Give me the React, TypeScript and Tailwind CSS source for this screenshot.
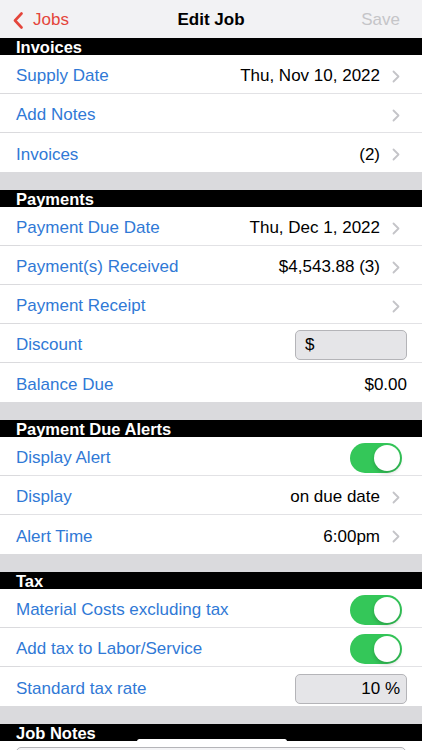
import React from 'react';

const font = { fontFamily: '"Liberation Sans", Arial, sans-serif' };

type Row =
  | { label: string; value?: string; chevron?: boolean }
  | { label: string; toggle: true }
  | { label: string; input: string; align: 'left' | 'right' };

const sections: { title: string; rows: Row[] }[] = [
  {
    title: 'Invoices',
    rows: [
      { label: 'Supply Date', value: 'Thu, Nov 10, 2022', chevron: true },
      { label: 'Add Notes', chevron: true },
      { label: 'Invoices', value: '(2)', chevron: true },
    ],
  },
  {
    title: 'Payments',
    rows: [
      { label: 'Payment Due Date', value: 'Thu, Dec 1, 2022', chevron: true },
      { label: 'Payment(s) Received', value: '$4,543.88 (3)', chevron: true },
      { label: 'Payment Receipt', chevron: true },
      { label: 'Discount', input: '$', align: 'left' },
      { label: 'Balance Due', value: '$0.00' },
    ],
  },
  {
    title: 'Payment Due Alerts',
    rows: [
      { label: 'Display Alert', toggle: true },
      { label: 'Display', value: 'on due date', chevron: true },
      { label: 'Alert Time', value: '6:00pm', chevron: true },
    ],
  },
  {
    title: 'Tax',
    rows: [
      { label: 'Material Costs excluding tax', toggle: true },
      { label: 'Add tax to Labor/Service', toggle: true },
      { label: 'Standard tax rate', input: '10 %', align: 'right' },
    ],
  },
];

function Chevron() {
  return (
    <svg width="8" height="13" viewBox="0 0 8 13" className="ml-[12px] mr-[7px] shrink-0">
      <path d="M1.5 1.5 L6.5 6.5 L1.5 11.5" fill="none" stroke="#c4c4c8" strokeWidth="1.8" strokeLinecap="round" strokeLinejoin="round" />
    </svg>
  );
}

function Toggle() {
  return (
    <div className="mr-[5px] flex h-[30px] w-[52px] items-center justify-end rounded-full bg-[#34c759] p-[2px]">
      <div className="h-[26px] w-[26px] rounded-full bg-white shadow-[0_2px_4px_rgba(0,0,0,0.2)]" />
    </div>
  );
}

function RowView({ row, last }: { row: Row; last: boolean }) {
  return (
    <>
      <div className={`flex items-center bg-white pl-4 pr-[15px] pt-[4px] ${last ? 'h-[39px]' : 'h-[38px]'}`}>
        <span className="flex-1 text-[17px] text-[#3079d6]">{row.label}</span>
        {'toggle' in row && <Toggle />}
        {'input' in row && (
          <div
            className={`flex h-[30px] w-[112px] items-center rounded-[5px] border border-[#b4b4b8] bg-[#e5e5e8] text-[17px] text-black ${
              row.align === 'right' ? 'justify-end pr-[6px]' : 'pl-[9px]'
            }`}
          >
            {row.input}
          </div>
        )}
        {!('toggle' in row) && !('input' in row) && (
          <>
            {row.value && <span className="text-[17px] text-black">{row.value}</span>}
            {row.chevron && <Chevron />}
          </>
        )}
      </div>
      {!last && <div className="ml-5 h-px bg-[#e2e2e5]" />}
    </>
  );
}

function Header({ title }: { title: string }) {
  return (
    <div className="h-[17px] bg-black pl-4 text-[16.5px] font-bold leading-[18px] text-white">{title}</div>
  );
}

export default function App() {
  return (
    <div className="relative h-[750px] w-[422px] overflow-hidden bg-[#dadadd]" style={font}>
      <div className="flex h-[38px] items-center bg-[#f2f2f4] px-[13px] pt-[2px]">
        <div className="flex w-[100px] items-center">
          <svg width="10" height="17" viewBox="0 0 10 17">
            <path d="M8.5 1.5 L2 8.5 L8.5 15.5" fill="none" stroke="#e4453b" strokeWidth="2.6" strokeLinecap="round" strokeLinejoin="round" />
          </svg>
          <span className="ml-[10px] text-[17px] text-[#e4453b]">Jobs</span>
        </div>
        <div className="flex-1 text-center text-[17px] font-bold text-black">Edit Job</div>
        <div className="w-[100px] pr-[9px] text-right text-[17px] text-[#c5c5c8]">Save</div>
      </div>

      {sections.map((s, i) => (
        <div key={s.title}>
          {i > 0 && <div className="h-[18px]" />}
          <Header title={s.title} />
          {s.rows.map((r, j) => (
            <RowView key={r.label} row={r} last={j === s.rows.length - 1} />
          ))}
        </div>
      ))}

      <div className="h-[18px]" />
      <Header title="Job Notes" />
      <div className="bg-white px-4 pt-[6px]">
        <div className="h-[80px] rounded-[5px] border border-[#b4b4b8] bg-[#f4f4f6]" />
      </div>

      <div className="absolute left-[137px] top-[739px] h-[5px] w-[150px] rounded-full bg-white" />
    </div>
  );
}
